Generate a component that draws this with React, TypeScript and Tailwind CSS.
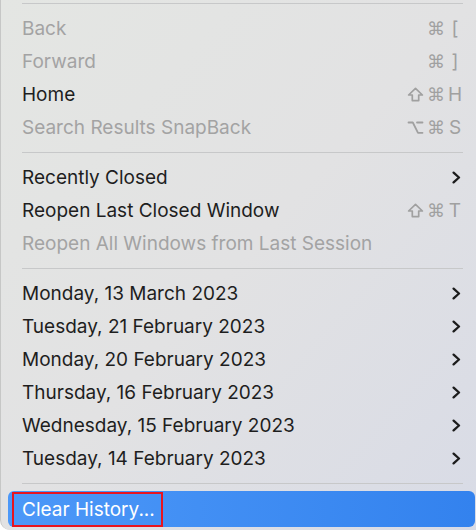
import React from 'react'

type Mod = 'cmd' | 'shift' | 'opt'

type Item = {
    label: string
    disabled?: boolean
    mods?: Mod[]
    keyName?: string
    submenu?: boolean
}

const navItems: Item[] = [
    { label: 'Back', disabled: true, mods: ['cmd'], keyName: '[' },
    { label: 'Forward', disabled: true, mods: ['cmd'], keyName: ']' },
    { label: 'Home', mods: ['shift', 'cmd'], keyName: 'H' },
    { label: 'Search Results SnapBack', disabled: true, mods: ['opt', 'cmd'], keyName: 'S' },
]

const closedItems: Item[] = [
    { label: 'Recently Closed', submenu: true },
    { label: 'Reopen Last Closed Window', mods: ['shift', 'cmd'], keyName: 'T' },
    { label: 'Reopen All Windows from Last Session', disabled: true },
]

const dayItems: Item[] = [
    'Monday, 13 March 2023',
    'Tuesday, 21 February 2023',
    'Monday, 20 February 2023',
    'Thursday, 16 February 2023',
    'Wednesday, 15 February 2023',
    'Tuesday, 14 February 2023',
].map((label) => ({ label, submenu: true }))

function Chevron() {
    return (
        <svg width="9" height="13" viewBox="0 0 9 13" className="mr-[1px]">
            <path d="M1.6 1.6 L7 6.5 L1.6 11.4" fill="none" stroke="#1c1c1c" strokeWidth="2.3" strokeLinecap="round" strokeLinejoin="round" />
        </svg>
    )
}

function ModKey({ mod }: { mod: Mod }) {
    if (mod === 'cmd') {
        return <span className="w-[17px] text-center font-['DejaVu_Sans',sans-serif] text-[18px]">⌘</span>
    }
    if (mod === 'shift') {
        return (
            <svg width="17" height="15" viewBox="0 0 17 15">
                <path d="M8.5 1.3 L1.6 8 H5.3 V13.6 H11.7 V8 H15.4 Z" fill="none" stroke="#a0a0a0" strokeWidth="1.7" strokeLinejoin="round" />
            </svg>
        )
    }
    return (
        <svg width="17" height="15" viewBox="0 0 17 15">
            <path d="M1.5 2.5 H5.8 L11 12.8 H15.5 M10 2.5 H15.5" fill="none" stroke="#a0a0a0" strokeWidth="1.8" strokeLinecap="round" strokeLinejoin="round" />
        </svg>
    )
}

function Row({ item }: { item: Item }) {
    return (
        <div className="flex h-[33px] items-center justify-between pl-[21px] pr-[14px]">
            <span className={item.disabled ? 'text-[#a3a3a3]' : 'text-[#1e1e1e]'}>{item.label}</span>
            {item.keyName && (
                <span className="flex items-center gap-[3px] text-[#a0a0a0]">
                    {item.mods?.map((m) => <ModKey key={m} mod={m} />)}
                    <span className="ml-[1px] w-[14px] text-center">{item.keyName}</span>
                </span>
            )}
            {item.submenu && <Chevron />}
        </div>
    )
}

function Separator({ top = 'mt-2' }: { top?: string }) {
    return <div className={`${top} mb-2 ml-[21px] mr-[13px] h-px bg-[#c7c8c9]`} />
}

export default function App() {
    return (
        <div className="h-[530px] w-[476px] overflow-hidden rounded-bl-[10px] border-l border-[#c6c7c6] bg-gradient-to-br from-[#e4e6e3] via-[#e2e2e3] to-[#d8dbe6] font-[Inter,'Noto_Sans',sans-serif] text-[19px] leading-none">
            <Separator top="mt-[3px]" />
            {navItems.map((i) => <Row key={i.label} item={i} />)}
            <Separator />
            {closedItems.map((i) => <Row key={i.label} item={i} />)}
            <Separator />
            {dayItems.map((i) => <Row key={i.label} item={i} />)}
            <Separator top="mt-2" />
            <div className="-mt-[1px] ml-[7px] mr-[1px] flex h-[36px] items-stretch rounded-[6px] bg-gradient-to-r from-[#4c98f8] to-[#3382ee] pl-[4px]">
                <span className="mt-[1px] flex w-[151px] items-center border-2 border-[#e8141f] pl-[8px] text-white">
                    Clear History...
                </span>
            </div>
        </div>
    )
}
